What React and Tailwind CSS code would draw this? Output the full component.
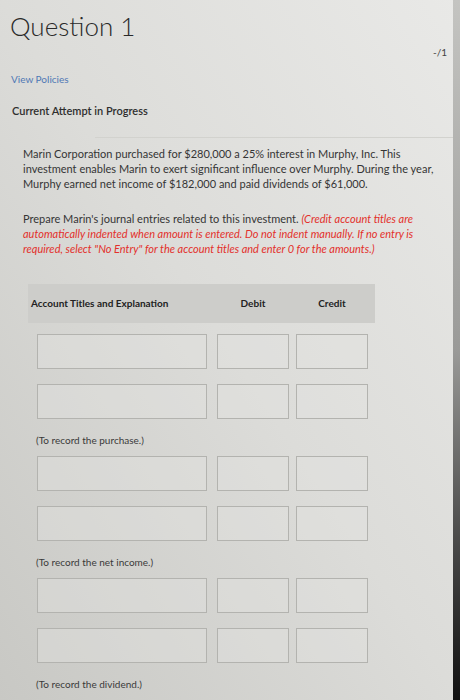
import React from "react";

const groups = [
  "(To record the purchase.)",
  "(To record the net income.)",
  "(To record the dividend.)",
];

const EntryRow = () => (
  <div className="flex pl-[9px]">
    <div className="h-[35px] w-[170px] border border-[#b3b3af] bg-[#e3e3e0]/40" />
    <div className="ml-[10px] h-[35px] w-[72px] border border-[#b3b3af] bg-[#e3e3e0]/40" />
    <div className="ml-[7px] h-[35px] w-[72px] border border-[#b3b3af] bg-[#e3e3e0]/40" />
  </div>
);

const App = () => {
  return (
    <div className="flex min-h-[700px] w-full bg-linear-to-bl from-[#e9e9e7] via-[#dcdcd9] to-[#c8c8c4] font-['Lato','Open_Sans',sans-serif] text-[#333]">
      <div className="flex-1 pb-2">
        <div className="flex items-start justify-between pl-[10px] pt-[10px]">
          <h1 className="text-[26px] font-light leading-[32px] text-[#2a2a2a]">Question 1</h1>
          <div className="mr-[6px] mt-[35px] text-[10px] leading-[14px] text-[#444]">-/1</div>
        </div>

        <div className="mt-[13px] pl-[11px] text-[10px] leading-[14px] text-[#4f78b5]">View Policies</div>
        <div className="mt-[18px] pl-[12px] text-[11px] font-semibold leading-[14px] text-[#2e2e2e]">
          Current Attempt in Progress
        </div>

        <div className="ml-[95px] mt-[19px] border-t border-[#d2d2ce]" />

        <p className="ml-[23px] mr-[8px] mt-[8px] text-[11px] leading-[15px] text-[#353535]">
          Marin Corporation purchased for $280,000 a 25% interest in Murphy, Inc. This investment enables Marin
          to exert significant influence over Murphy. During the year, Murphy earned net income of $182,000 and
          paid dividends of $61,000.
        </p>

        <p className="ml-[23px] mr-[8px] mt-[20px] text-[11px] leading-[15px] text-[#353535]">
          Prepare Marin's journal entries related to this investment.{" "}
          <span className="italic text-[#e3302b]">
            (Credit account titles are automatically indented when amount is entered. Do not indent manually.
            If no entry is required, select "No Entry" for the account titles and enter 0 for the amounts.)
          </span>
        </p>

        <div className="ml-[28px] mt-[28px] w-[347px]">
          <div className="flex h-[39px] items-center bg-[#cdcdca] pl-[3px] text-[10px] font-bold text-[#222]">
            <div className="w-[176px]">Account Titles and Explanation</div>
            <div className="ml-[10px] w-[72px] text-center">Debit</div>
            <div className="ml-[7px] w-[72px] text-center">Credit</div>
          </div>

          {groups.map((label, i) => (
            <div key={label} className={i === 0 ? "mt-[11px]" : "mt-[9px]"}>
              <div className="flex flex-col gap-[15px]">
                <EntryRow />
                <EntryRow />
              </div>
              <div className="mt-[14px] pl-[8px] text-[10px] leading-[14px] text-[#3a3a3a]">{label}</div>
            </div>
          ))}
        </div>
      </div>
      <div className="w-[7px] bg-linear-to-b from-[#c4c4c1] via-[#9a9a98] to-[#111]" />
    </div>
  );
};

export default App;
